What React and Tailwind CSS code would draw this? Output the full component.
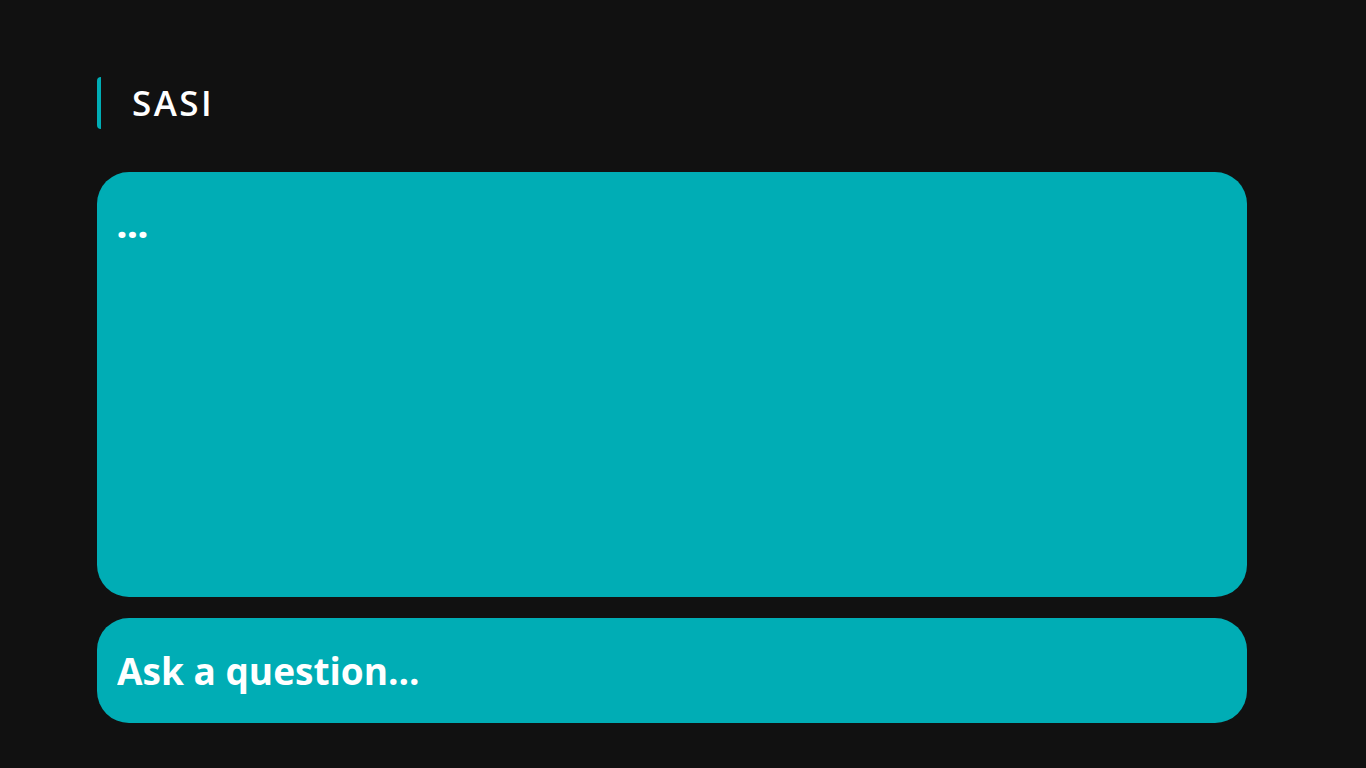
export default function App() {
  return (
    <div className="min-h-screen bg-[#111111] text-white" style={{ fontFamily: '"Open Sans", "Noto Sans", sans-serif' }}>
      <div className="w-[1150px] ml-[97px] pt-[77px]">
        <div className="flex items-center h-[52px] border-l-4 border-[#00adb5] rounded-sm">
          <h1 className="ml-[31px] text-[35px] font-semibold tracking-[0.07em]">SASI</h1>
        </div>

        <div className="mt-[43px] h-[425px] bg-[#00adb5] rounded-[32px] px-5 pt-[36px]">
          <p className="text-[34px] font-extrabold leading-none tracking-[0.02em]">...</p>
        </div>

        <div className="mt-[21px] h-[105px] bg-[#00adb5] rounded-[32px] flex items-center px-5">
          <input
            placeholder="Ask a question..."
            className="w-full bg-transparent outline-none text-[37px] font-bold text-white placeholder:text-white"
          />
        </div>
      </div>
    </div>
  );
}
